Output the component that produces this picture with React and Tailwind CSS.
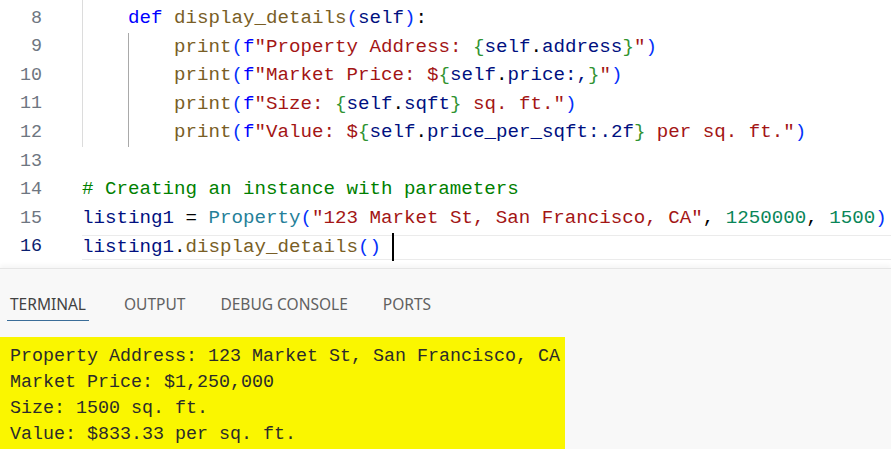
import React from "react";

// token colours (VS Code Light+)
const K = "text-[#0000ff]";
const F = "text-[#795e26]";
const B1 = "text-[#0431fa]";
const B2 = "text-[#319331]";
const V = "text-[#001080]";
const S = "text-[#a31515]";
const C = "text-[#008000]";
const N = "text-[#098658]";
const T = "text-[#267f99]";
const D = "text-[#000000]";

const mono = { fontFamily: '"Liberation Mono", "DejaVu Sans Mono", monospace' };

function Guide({ active = false }) {
  return (
    <span
      className={
        "w-[46px] self-stretch shrink-0 border-l " +
        (active ? "border-[#a9a9a9]" : "border-[#dcdcdc]")
      }
    />
  );
}

function Tok({ c, children }) {
  return <span className={c}>{children}</span>;
}

function Line({ num, current = false, children }) {
  return (
    <div className="flex h-[28.6px] items-center">
      <div
        className={
          "w-[42px] text-right text-[18.33px] " +
          (current ? "text-[#0b216f]" : "text-[#6e7681]")
        }
      >
        {num}
      </div>
      <div className="ml-[40px] flex h-full flex-1 items-center whitespace-pre">
        {children}
      </div>
    </div>
  );
}

export default function App() {
  return (
    <div className="w-[891px] h-[449px] overflow-hidden bg-white" style={mono}>
      {/* Editor */}
      <div className="h-[268px] text-[19.17px] text-black">
        <div className="ml-[82px] h-[4px] border-l border-[#dcdcdc]" />

        <Line num="8">
          <Guide />
          <Tok c={K}>def</Tok>
          <Tok c={D}>{" "}</Tok>
          <Tok c={F}>display_details</Tok>
          <Tok c={B1}>(</Tok>
          <Tok c={V}>self</Tok>
          <Tok c={B1}>)</Tok>
          <Tok c={D}>:</Tok>
        </Line>

        <Line num="9">
          <Guide />
          <Guide active />
          <Tok c={F}>print</Tok>
          <Tok c={B1}>(</Tok>
          <Tok c={K}>f</Tok>
          <Tok c={S}>"Property Address: </Tok>
          <Tok c={B2}>{"{"}</Tok>
          <Tok c={V}>self</Tok>
          <Tok c={D}>.</Tok>
          <Tok c={V}>address</Tok>
          <Tok c={B2}>{"}"}</Tok>
          <Tok c={S}>"</Tok>
          <Tok c={B1}>)</Tok>
        </Line>

        <Line num="10">
          <Guide />
          <Guide active />
          <Tok c={F}>print</Tok>
          <Tok c={B1}>(</Tok>
          <Tok c={K}>f</Tok>
          <Tok c={S}>"Market Price: $</Tok>
          <Tok c={B2}>{"{"}</Tok>
          <Tok c={V}>self</Tok>
          <Tok c={D}>.</Tok>
          <Tok c={V}>price</Tok>
          <Tok c={V}>:,</Tok>
          <Tok c={B2}>{"}"}</Tok>
          <Tok c={S}>"</Tok>
          <Tok c={B1}>)</Tok>
        </Line>

        <Line num="11">
          <Guide />
          <Guide active />
          <Tok c={F}>print</Tok>
          <Tok c={B1}>(</Tok>
          <Tok c={K}>f</Tok>
          <Tok c={S}>"Size: </Tok>
          <Tok c={B2}>{"{"}</Tok>
          <Tok c={V}>self</Tok>
          <Tok c={D}>.</Tok>
          <Tok c={V}>sqft</Tok>
          <Tok c={B2}>{"}"}</Tok>
          <Tok c={S}> sq. ft."</Tok>
          <Tok c={B1}>)</Tok>
        </Line>

        <Line num="12">
          <Guide />
          <Guide active />
          <Tok c={F}>print</Tok>
          <Tok c={B1}>(</Tok>
          <Tok c={K}>f</Tok>
          <Tok c={S}>"Value: $</Tok>
          <Tok c={B2}>{"{"}</Tok>
          <Tok c={V}>self</Tok>
          <Tok c={D}>.</Tok>
          <Tok c={V}>price_per_sqft</Tok>
          <Tok c={V}>:.2f</Tok>
          <Tok c={B2}>{"}"}</Tok>
          <Tok c={S}> per sq. ft."</Tok>
          <Tok c={B1}>)</Tok>
        </Line>

        <Line num="13" />

        <Line num="14">
          <Tok c={C}># Creating an instance with parameters</Tok>
        </Line>

        <Line num="15">
          <Tok c={V}>listing1</Tok>
          <Tok c={D}> = </Tok>
          <Tok c={T}>Property</Tok>
          <Tok c={B1}>(</Tok>
          <Tok c={S}>"123 Market St, San Francisco, CA"</Tok>
          <Tok c={D}>, </Tok>
          <Tok c={N}>1250000</Tok>
          <Tok c={D}>, </Tok>
          <Tok c={N}>1500</Tok>
          <Tok c={B1}>)</Tok>
        </Line>

        {/* current line */}
        <div className="flex h-[28.6px] items-center">
          <div className="w-[42px] text-right text-[18.33px] text-[#0b216f]">16</div>
          <div className="ml-[40px] flex h-[25px] flex-1 items-center whitespace-pre border-y border-[#ebebeb]">
            <Tok c={V}>listing1</Tok>
            <Tok c={D}>.</Tok>
            <Tok c={F}>display_details</Tok>
            <Tok c={B1}>()</Tok>
            <span> </span>
            <span className="h-[28px] w-[2px] bg-black" />
          </div>
        </div>
      </div>

      {/* Panel */}
      <div className="h-[181px] border-t border-[#e5e5e5] bg-[#f8f8f8] shadow-[0_-3px_4px_rgba(0,0,0,0.04)]">
        <div
          className="flex h-[68px] items-start gap-[35px] pl-[7px] pt-[24px] text-[15.5px] text-[#616161]"
          style={{ fontFamily: '"Noto Sans", "Open Sans", sans-serif' }}
        >
          <div className="border-b-[1.5px] border-[#3a6d99] px-[3px] pb-[4px] text-[#424242]">
            TERMINAL
          </div>
          <div>OUTPUT</div>
          <div>DEBUG CONSOLE</div>
          <div>PORTS</div>
        </div>

        <div className="h-[113px] w-[565px] bg-[#faf600] pl-[10px] pt-[7px] text-[18.33px] leading-[26px] text-[#2b2b2b] whitespace-pre">
          <div>Property Address: 123 Market St, San Francisco, CA</div>
          <div>Market Price: $1,250,000</div>
          <div>Size: 1500 sq. ft.</div>
          <div>Value: $833.33 per sq. ft.</div>
        </div>
      </div>
    </div>
  );
}
